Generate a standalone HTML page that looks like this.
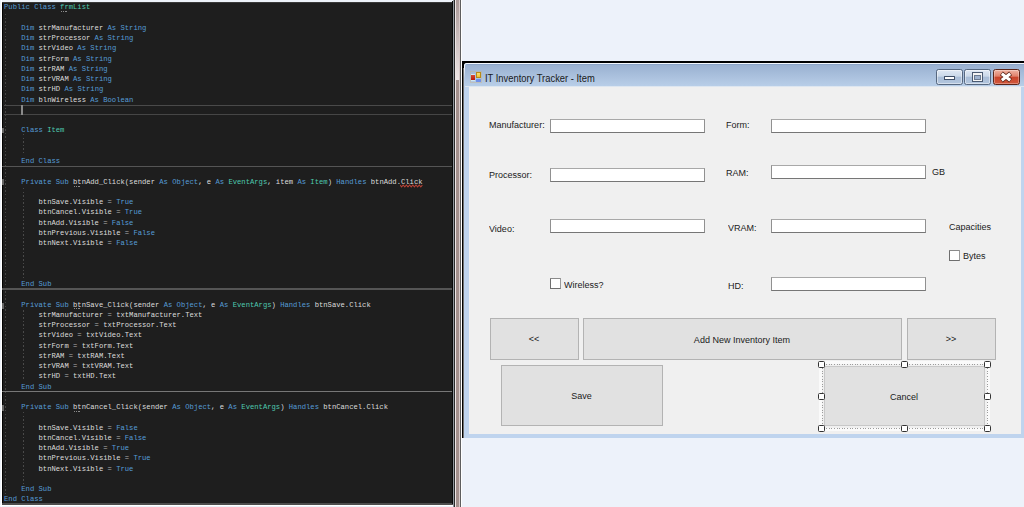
<!DOCTYPE html>
<html><head><meta charset="utf-8">
<style>
*{margin:0;padding:0;box-sizing:border-box}
html,body{width:1024px;height:507px;overflow:hidden;background:#EDF2FA;position:relative;font-family:"Liberation Sans",sans-serif}
.abs{position:absolute}
#ed{position:absolute;left:2px;top:1.5px;width:451px;height:503px;background:#1E1E1E;overflow:hidden}
.ln{position:absolute;left:2.3px;height:10px;line-height:10px;white-space:pre;font-family:"Liberation Mono",monospace;font-size:7.5px;letter-spacing:0;transform:scaleX(0.9582);transform-origin:0 0;color:#DCDCDC}
.ln{font-weight:normal}.ln b{font-weight:normal}
.sep{position:absolute;left:0;width:451px;height:1.5px;background:#555}
.lbl{position:absolute;font-size:11px;line-height:12px;color:#1a1a1a;white-space:pre;transform:scale(0.82,0.9);transform-origin:0 9.81px}
.tb{position:absolute;background:#fff;border:1px solid #909090;border-top-color:#A8A8A8;border-bottom-color:#767676;width:155px;height:14px}
.btn{position:absolute;background:#E1E1E1;border:1px solid #B3B3B3}
.btn span{position:absolute;left:-1px;right:0;text-align:center;font-size:11px;line-height:12px;color:#1a1a1a;white-space:pre;transform:scale(0.82,0.9);transform-origin:50% 9.81px}
.cb{position:absolute;width:11px;height:11px;background:#fff;border:1px solid #6E6E6E;border-top-color:#8A8A8A;border-right-color:#9A9A9A;border-radius:.5px}
.h{position:absolute;width:7px;height:7px;background:#fff;border:1px solid #333;border-radius:1.5px}
</style></head><body>
<div class="abs" style="left:1px;top:0;width:1px;height:507px;background:#fff"></div>
<div class="abs" style="left:0;top:504.5px;width:453px;height:1px;background:#fff"></div>
<div id="ed">

<div class="abs" style="left:0;top:0;width:1px;height:507px;background:#000;opacity:.9"></div>
<div class="abs" style="left:0;top:0;width:451px;height:1px;background:#3a3a3a"></div>
<div class="abs" style="left:2.8px;top:12px;width:1.5px;height:482px;background:repeating-linear-gradient(#454545 0 1.5px,transparent 1.5px 3.6px)"></div>
<div class="abs" style="left:21.3px;top:132.5px;width:1.2px;height:21px;background:repeating-linear-gradient(#4a4a4a 0 1.5px,transparent 1.5px 3.55px)"></div>
<div class="abs" style="left:21.3px;top:186.5px;width:1.2px;height:91px;background:repeating-linear-gradient(#4a4a4a 0 1.5px,transparent 1.5px 3.55px)"></div>
<div class="abs" style="left:21.3px;top:308.5px;width:1.2px;height:71px;background:repeating-linear-gradient(#4a4a4a 0 1.5px,transparent 1.5px 3.55px)"></div>
<div class="abs" style="left:21.3px;top:410.5px;width:1.2px;height:72px;background:repeating-linear-gradient(#4a4a4a 0 1.5px,transparent 1.5px 3.55px)"></div>
<div class="abs" style="left:2px;top:103.3px;width:449px;height:10px;border-top:1.5px solid #4a4a4a;border-bottom:1px solid #464646"></div>
<div class="abs" style="left:19.2px;top:103.5px;width:1.5px;height:9.5px;background:#8a8a8a"></div>
<div class="abs" style="left:0;top:501px;width:451px;height:2px;background:#4d4d4d"></div>
<div class="sep" style="top:164px"></div>
<div class="sep" style="top:286.7px"></div>
<div class="sep" style="top:389.4px;background:#777"></div>
<div class="abs" style="left:0.3px;top:126.8px;width:1.5px;height:5px;background:#666"></div>
<div class="abs" style="left:0.3px;top:177.5px;width:1.5px;height:6px;background:#666"></div>
<div class="abs" style="left:0.3px;top:301.5px;width:1.5px;height:6px;background:#666"></div>
<div class="abs" style="left:0.3px;top:403.5px;width:1.5px;height:6px;background:#666"></div>
<div class="ln" style="top:0.80px"><b style="color:#569CD6">Public</b> <b style="color:#569CD6">Class</b> <b style="color:#4EC9B0">frmList</b></div>
<div class="ln" style="top:11.05px"></div>
<div class="ln" style="top:21.30px">    <b style="color:#569CD6">Dim</b> strManufacturer <b style="color:#569CD6">As</b> <b style="color:#569CD6">String</b></div>
<div class="ln" style="top:31.55px">    <b style="color:#569CD6">Dim</b> strProcessor <b style="color:#569CD6">As</b> <b style="color:#569CD6">String</b></div>
<div class="ln" style="top:41.80px">    <b style="color:#569CD6">Dim</b> strVideo <b style="color:#569CD6">As</b> <b style="color:#569CD6">String</b></div>
<div class="ln" style="top:52.05px">    <b style="color:#569CD6">Dim</b> strForm <b style="color:#569CD6">As</b> <b style="color:#569CD6">String</b></div>
<div class="ln" style="top:62.30px">    <b style="color:#569CD6">Dim</b> strRAM <b style="color:#569CD6">As</b> <b style="color:#569CD6">String</b></div>
<div class="ln" style="top:72.55px">    <b style="color:#569CD6">Dim</b> strVRAM <b style="color:#569CD6">As</b> <b style="color:#569CD6">String</b></div>
<div class="ln" style="top:82.80px">    <b style="color:#569CD6">Dim</b> strHD <b style="color:#569CD6">As</b> <b style="color:#569CD6">String</b></div>
<div class="ln" style="top:93.05px">    <b style="color:#569CD6">Dim</b> blnWireless <b style="color:#569CD6">As</b> <b style="color:#569CD6">Boolean</b></div>
<div class="ln" style="top:103.30px"></div>
<div class="ln" style="top:113.55px"></div>
<div class="ln" style="top:123.80px">    <b style="color:#569CD6">Class</b> <b style="color:#4EC9B0">Item</b></div>
<div class="ln" style="top:134.05px"></div>
<div class="ln" style="top:144.30px"></div>
<div class="ln" style="top:154.55px">    <b style="color:#569CD6">End</b> <b style="color:#569CD6">Class</b></div>
<div class="ln" style="top:164.80px"></div>
<div class="ln" style="top:175.05px">    <b style="color:#569CD6">Private</b> <b style="color:#569CD6">Sub</b> btnAdd_Click(sender <b style="color:#569CD6">As</b> <b style="color:#569CD6">Object</b>, e <b style="color:#569CD6">As</b> <b style="color:#4EC9B0">EventArgs</b>, item <b style="color:#569CD6">As</b> <b style="color:#4EC9B0">Item</b>) <b style="color:#569CD6">Handles</b> btnAdd.Click</div>
<div class="ln" style="top:185.30px"></div>
<div class="ln" style="top:195.55px">        btnSave.Visible <b style="color:#B4B4B4">=</b> <b style="color:#569CD6">True</b></div>
<div class="ln" style="top:205.80px">        btnCancel.Visible <b style="color:#B4B4B4">=</b> <b style="color:#569CD6">True</b></div>
<div class="ln" style="top:216.05px">        btnAdd.Visible <b style="color:#B4B4B4">=</b> <b style="color:#569CD6">False</b></div>
<div class="ln" style="top:226.30px">        btnPrevious.Visible <b style="color:#B4B4B4">=</b> <b style="color:#569CD6">False</b></div>
<div class="ln" style="top:236.55px">        btnNext.Visible <b style="color:#B4B4B4">=</b> <b style="color:#569CD6">False</b></div>
<div class="ln" style="top:246.80px"></div>
<div class="ln" style="top:257.05px"></div>
<div class="ln" style="top:267.30px"></div>
<div class="ln" style="top:277.55px">    <b style="color:#569CD6">End</b> <b style="color:#569CD6">Sub</b></div>
<div class="ln" style="top:287.80px"></div>
<div class="ln" style="top:298.05px">    <b style="color:#569CD6">Private</b> <b style="color:#569CD6">Sub</b> btnSave_Click(sender <b style="color:#569CD6">As</b> <b style="color:#569CD6">Object</b>, e <b style="color:#569CD6">As</b> <b style="color:#4EC9B0">EventArgs</b>) <b style="color:#569CD6">Handles</b> btnSave.Click</div>
<div class="ln" style="top:308.30px">        strManufacturer <b style="color:#B4B4B4">=</b> txtManufacturer.Text</div>
<div class="ln" style="top:318.55px">        strProcessor <b style="color:#B4B4B4">=</b> txtProcessor.Text</div>
<div class="ln" style="top:328.80px">        strVideo <b style="color:#B4B4B4">=</b> txtVideo.Text</div>
<div class="ln" style="top:339.05px">        strForm <b style="color:#B4B4B4">=</b> txtForm.Text</div>
<div class="ln" style="top:349.30px">        strRAM <b style="color:#B4B4B4">=</b> txtRAM.Text</div>
<div class="ln" style="top:359.55px">        strVRAM <b style="color:#B4B4B4">=</b> txtVRAM.Text</div>
<div class="ln" style="top:369.80px">        strHD <b style="color:#B4B4B4">=</b> txtHD.Text</div>
<div class="ln" style="top:380.05px">    <b style="color:#569CD6">End</b> <b style="color:#569CD6">Sub</b></div>
<div class="ln" style="top:390.30px"></div>
<div class="ln" style="top:400.55px">    <b style="color:#569CD6">Private</b> <b style="color:#569CD6">Sub</b> btnCancel_Click(sender <b style="color:#569CD6">As</b> <b style="color:#569CD6">Object</b>, e <b style="color:#569CD6">As</b> <b style="color:#4EC9B0">EventArgs</b>) <b style="color:#569CD6">Handles</b> btnCancel.Click</div>
<div class="ln" style="top:410.80px"></div>
<div class="ln" style="top:421.05px">        btnSave.Visible <b style="color:#B4B4B4">=</b> <b style="color:#569CD6">False</b></div>
<div class="ln" style="top:431.30px">        btnCancel.Visible <b style="color:#B4B4B4">=</b> <b style="color:#569CD6">False</b></div>
<div class="ln" style="top:441.55px">        btnAdd.Visible <b style="color:#B4B4B4">=</b> <b style="color:#569CD6">True</b></div>
<div class="ln" style="top:451.80px">        btnPrevious.Visible <b style="color:#B4B4B4">=</b> <b style="color:#569CD6">True</b></div>
<div class="ln" style="top:462.05px">        btnNext.Visible <b style="color:#B4B4B4">=</b> <b style="color:#569CD6">True</b></div>
<div class="ln" style="top:472.30px"></div>
<div class="ln" style="top:482.55px">    <b style="color:#569CD6">End</b> <b style="color:#569CD6">Sub</b></div>
<div class="ln" style="top:492.80px"><b style="color:#569CD6">End</b> <b style="color:#569CD6">Class</b></div>

<svg class="abs" style="left:398px;top:182.6px;opacity:.85" width="23" height="4" viewBox="0 0 23 4"><path d="M0 1 L1.6 2.8 L3.2 1 L4.8 2.8 L6.4 1 L8 2.8 L9.6 1 L11.2 2.8 L12.8 1 L14.4 2.8 L16 1 L17.6 2.8 L19.2 1 L20.8 2.8 L22.4 1" fill="none" stroke="#D0483A" stroke-width="1.1"/></svg>
<div class="abs" style="left:58.5px;top:9.6px;width:6.5px;height:1.2px;background:repeating-linear-gradient(90deg,#8a8a8a 0 1.2px,transparent 1.2px 2.2px)"></div>
<div class="abs" style="left:72px;top:184px;width:6.5px;height:1.2px;background:repeating-linear-gradient(90deg,#8a8a8a 0 1.2px,transparent 1.2px 2.2px)"></div>
<div class="abs" style="left:72px;top:306px;width:6.5px;height:1.2px;background:repeating-linear-gradient(90deg,#8a8a8a 0 1.2px,transparent 1.2px 2.2px)"></div>
<div class="abs" style="left:72px;top:409.8px;width:6.5px;height:1.2px;background:repeating-linear-gradient(90deg,#8a8a8a 0 1.2px,transparent 1.2px 2.2px)"></div>
</div>
<!-- splitter -->
<div class="abs" style="left:452px;top:1px;width:1px;height:503px;background:#080808"></div>
<div class="abs" style="left:453px;top:0;width:1px;height:507px;background:#8E949A"></div>
<div class="abs" style="left:454px;top:0;width:1px;height:507px;background:#2B2B2B"></div>
<div class="abs" style="left:455px;top:0;width:1px;height:507px;background:#EEE6E6"></div>
<div class="abs" style="left:456px;top:0;width:3px;height:507px;background:#A3908D"></div>
<div class="abs" style="left:456px;top:0;width:3px;height:80px;background:linear-gradient(#a99897,#efe7e7)"></div>
<div class="abs" style="left:459px;top:0;width:1px;height:507px;background:#D8CACA"></div>
<div class="abs" style="left:460px;top:0;width:1px;height:507px;background:#5E5E5E"></div>
<div class="abs" style="left:461px;top:0;width:1px;height:507px;background:#FFFFFF"></div>

<!-- form window -->
<div class="abs" style="left:462px;top:61px;width:562px;height:377px;background:#000"></div>
<div class="abs" style="left:463px;top:68px;width:1px;height:370px;background:#6F6F6F"></div>
<div class="abs" style="left:463.5px;top:63px;width:561px;height:375px;background:#BFD4EE;border-top-left-radius:3px;box-shadow:inset 1px 1px 0 rgba(250,252,255,.9)"></div>
<div class="abs" style="left:464.5px;top:64px;width:560px;height:23px;background:linear-gradient(#8CA5C8 0,#8CA5C8 1px,#9AB1D1 1px,#B8CEE8 22px,#DDE6F0 22px,#DDE6F0 23px);border-top-left-radius:2px"></div>
<div class="abs" style="left:463.5px;top:68px;width:1px;height:370px;background:linear-gradient(#f0f4fa 0,#b8cce6 10px,#BFD4EE 30px)"></div>
<div class="abs" style="left:469px;top:87px;width:552px;height:347px;background:#F0F0F0"></div>

<!-- title -->
<div class="abs" style="left:470px;top:71px;width:12px;height:12px;border:1px solid rgba(200,180,140,0.45)"></div>
<div class="abs" style="left:471px;top:74px;width:4px;height:7px;background:#CFE6F2"></div>
<div class="abs" style="left:471px;top:75px;width:3.5px;height:5px;background:linear-gradient(#d84a30,#b81a0c)"></div>
<div class="abs" style="left:475.5px;top:72px;width:5.5px;height:6px;background:linear-gradient(#f8e070,#f0c030);border:1px solid #B88A18"></div>
<div class="abs" style="left:476px;top:79px;width:4.8px;height:2.8px;background:#6F8FEA;border-radius:.5px"></div>
<div class="lbl" style="left:485px;top:72.59px;color:#1a1a1a;font-size:10px;transform:scaleX(0.937)">IT Inventory Tracker - Item</div>
<!-- window buttons -->
<div class="abs" style="left:936px;top:69px;width:27px;height:16px;border:1px solid #56677F;border-radius:2.5px;background:linear-gradient(#dfe8f3 0,#cad8e9 45%,#a9bdd7 50%,#b3c6de 100%);box-shadow:inset 0 0 0 1px rgba(255,255,255,.45)"></div>
<div class="abs" style="left:944px;top:75.5px;width:11px;height:4.5px;background:#fff;border:1px solid #3e4e66;border-radius:.5px"></div>
<div class="abs" style="left:964px;top:69px;width:27px;height:16px;border:1px solid #56677F;border-radius:2.5px;background:linear-gradient(#dfe8f3 0,#cad8e9 45%,#a9bdd7 50%,#b3c6de 100%);box-shadow:inset 0 0 0 1px rgba(255,255,255,.45)"></div>
<div class="abs" style="left:972px;top:72px;width:11px;height:10px;border:1px solid #4a5a72;background:#f4f4f4"></div>
<div class="abs" style="left:974px;top:75px;width:7px;height:5px;background:#9fb3cf;border:1px solid #6a7a90"></div>
<div class="abs" style="left:993px;top:69px;width:27px;height:16px;border:1px solid #5b2418;border-radius:2.5px;background:linear-gradient(#efb3a3 0,#e0806a 45%,#c8432b 50%,#d2583c 100%);box-shadow:inset 0 0 0 1px rgba(255,255,255,.3)"></div>
<svg class="abs" style="left:993px;top:69px" width="29" height="18" viewBox="0 0 29 18"><path d="M8.4 4.4 L17.6 11.6 M17.6 4.4 L8.4 11.6" stroke="#5a2418" stroke-width="4.6" stroke-linecap="butt"/><path d="M8.8 4.7 L17.2 11.3 M17.2 4.7 L8.8 11.3" stroke="#fff" stroke-width="3" stroke-linecap="butt"/></svg>

<!-- labels -->
<div class="lbl" style="left:489px;top:118.19px">Manufacturer:</div>
<div class="tb" style="left:550px;top:119px"></div>
<div class="lbl" style="left:726px;top:117.69px">Form:</div>
<div class="tb" style="left:771px;top:119px"></div>

<div class="lbl" style="left:489px;top:167.69px">Processor:</div>
<div class="tb" style="left:550px;top:168px"></div>
<div class="lbl" style="left:726px;top:166.19px">RAM:</div>
<div class="tb" style="left:771px;top:165px"></div>
<div class="lbl" style="left:932px;top:164.79px">GB</div>

<div class="lbl" style="left:489px;top:222.19px">Video:</div>
<div class="tb" style="left:550px;top:219px"></div>
<div class="lbl" style="left:728px;top:220.79px">VRAM:</div>
<div class="tb" style="left:771px;top:219px"></div>
<div class="lbl" style="left:949px;top:220.49px">Capacities</div>

<div class="cb" style="left:949px;top:250px"></div>
<div class="lbl" style="left:963px;top:248.89px">Bytes</div>
<div class="cb" style="left:550px;top:278px"></div>
<div class="lbl" style="left:564px;top:278.19px">Wireless?</div>
<div class="lbl" style="left:728px;top:279.19px">HD:</div>
<div class="tb" style="left:771px;top:277px"></div>

<!-- buttons -->
<div class="btn" style="left:490px;top:318px;width:89px;height:42px"><span style="top:13.1px">&lt;&lt;</span></div>
<div class="btn" style="left:583px;top:318px;width:319px;height:42px"><span style="top:13.7px">Add New Inventory Item</span></div>
<div class="btn" style="left:907px;top:318px;width:89px;height:42px"><span style="top:13.1px">&gt;&gt;</span></div>
<div class="btn" style="left:501px;top:365px;width:162px;height:61px"><span style="top:23.1px">Save</span></div>

<!-- cancel with selection -->
<div class="abs" style="left:819px;top:361px;width:171px;height:70px;border:3px solid #FAFAFA"></div>
<div class="abs" style="left:821px;top:363.5px;width:167px;height:1px;background:repeating-linear-gradient(90deg,#9c9c9c 0 1px,transparent 1px 2.6px)"></div>
<div class="abs" style="left:821px;top:428px;width:167px;height:1px;background:repeating-linear-gradient(90deg,#9c9c9c 0 1px,transparent 1px 2.6px)"></div>
<div class="abs" style="left:821.5px;top:363px;width:1px;height:66px;background:repeating-linear-gradient(#9c9c9c 0 1px,transparent 1px 2.6px)"></div>
<div class="abs" style="left:986.5px;top:363px;width:1px;height:66px;background:repeating-linear-gradient(#9c9c9c 0 1px,transparent 1px 2.6px)"></div>
<div class="btn" style="left:824px;top:366px;width:161px;height:60px;border-color:#C8C8C8"><span style="top:22.9px">Cancel</span></div>
<div class="h" style="left:818px;top:361px"></div>
<div class="h" style="left:901px;top:361px"></div>
<div class="h" style="left:984px;top:361px"></div>
<div class="h" style="left:818px;top:393px"></div>
<div class="h" style="left:984px;top:393px"></div>
<div class="h" style="left:818px;top:425px"></div>
<div class="h" style="left:901px;top:425px"></div>
<div class="h" style="left:984px;top:425px"></div>

</body></html>
